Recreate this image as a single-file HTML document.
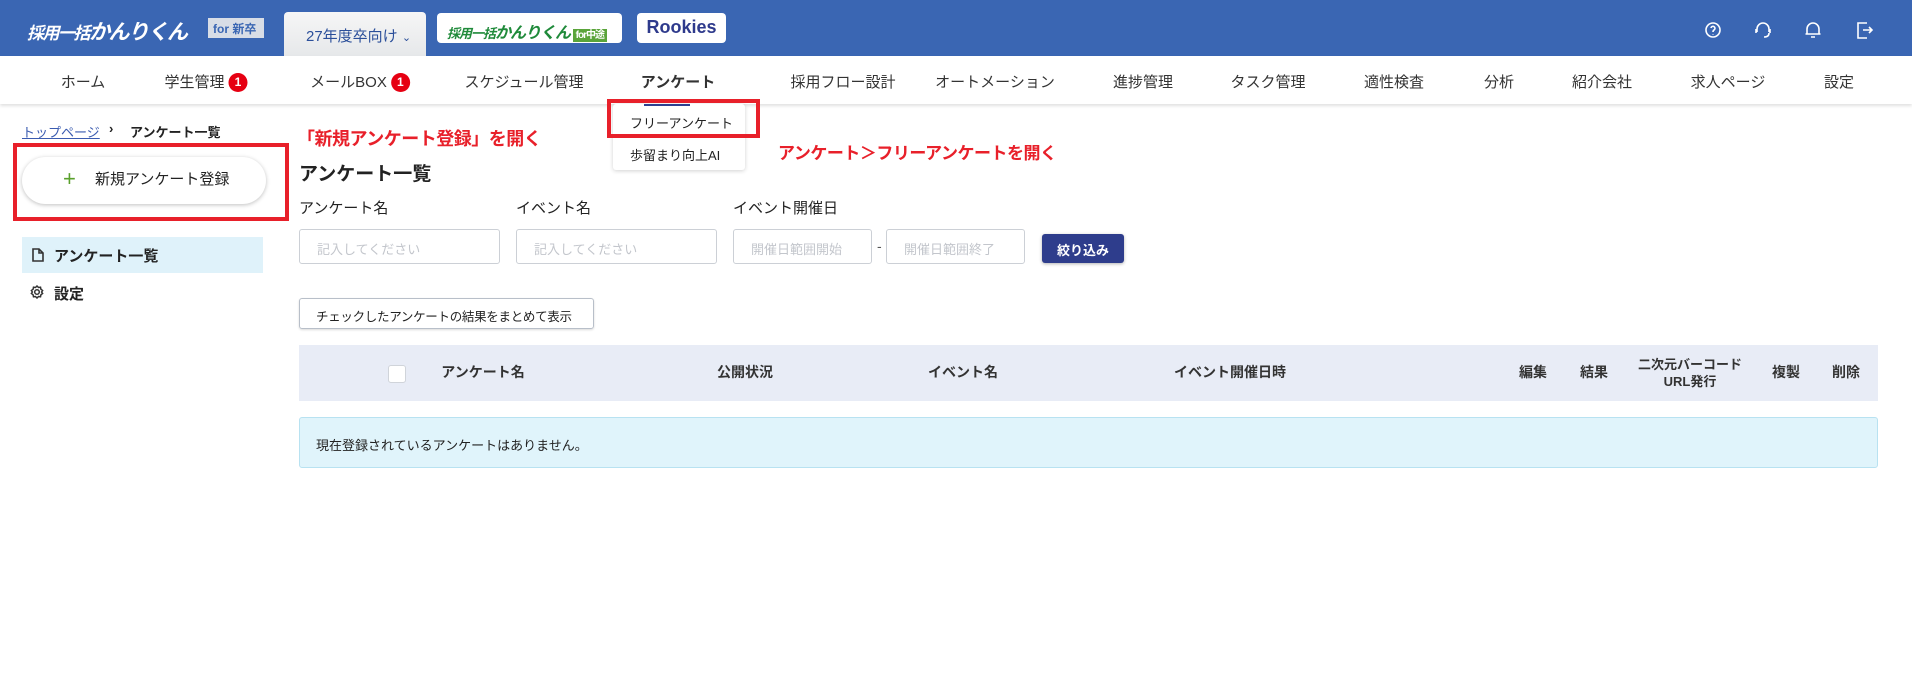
<!DOCTYPE html>
<html><head><meta charset="utf-8">
<style>
*{box-sizing:border-box;margin:0;padding:0}
body{width:1912px;height:679px;background:#fff;font-family:"Liberation Sans","Noto Sans CJK JP",sans-serif;color:#222;position:relative;overflow:hidden}
.a{position:absolute;white-space:nowrap}
.hdr{left:0;top:0;width:1912px;height:56px;background:#3a66b3}
.nav{left:0;top:56px;width:1912px;height:48px;background:#fff;box-shadow:0 2px 3px rgba(0,0,0,.12)}
.ni{top:71px;font-size:15px;color:#333;transform:translateX(-50%)}
.badge{display:inline-block;width:19px;height:19px;border-radius:50%;background:#e60012;color:#fff;font-size:12px;font-weight:bold;text-align:center;line-height:19px;vertical-align:1px;margin-left:4px}
.lbl{top:197px;font-size:15px;color:#222}
.inp{top:229px;height:35px;border:1px solid #ccd0d6;border-radius:3px;font-size:13px;color:#c3c6cc;padding:9px 0 0 17px}
.th{top:362px;font-size:14px;font-weight:bold;color:#333;transform:translateX(-50%);text-align:center}
.red{color:#e8202a;font-weight:bold}
.rbox{border:4px solid #e8202a}
</style></head><body>
<div class="a hdr"></div>
<div class="a" style="left:27px;top:16px;font-size:17px;font-weight:bold;font-style:italic;color:#fff;letter-spacing:-1.5px">採用一括<span style="font-size:21px">かんりくん</span></div>
<div class="a" style="left:208px;top:18px;width:56px;height:20px;background:#d8dde6;color:#3a66b3;font-size:12px;font-weight:bold;padding:2px 0 0 5px">for 新卒</div>
<div class="a" style="left:284px;top:12px;width:142px;height:44px;background:linear-gradient(#f6f6f6,#e6e8ea);border-radius:4px 4px 0 0;color:#2b4f9a;font-size:15px;padding:13px 0 0 22px">27年度卒向け <span style="font-size:11px">&#8964;</span></div>
<div class="a" style="left:437px;top:13px;width:185px;height:30px;background:#fff;border-radius:4px;padding:6px 0 0 10px;font-size:13px;font-weight:bold;font-style:italic;color:#1f8a3a;letter-spacing:-1px">採用一括<span style="font-size:16px">かんりくん</span> <span style="background:#5aa43a;color:#fff;font-size:10px;font-style:normal;padding:1px 3px">for中途</span></div>
<div class="a" style="left:637px;top:13px;width:89px;height:30px;background:#fff;border-radius:4px;text-align:center;padding-top:4px;font-size:18px;font-weight:bold;color:#2e3a8c">Rookies</div>
<svg class="a" style="left:1703px;top:19px" width="180" height="22" fill="none" stroke="#fff" stroke-width="1.6">
<circle cx="10" cy="11" r="7"/><path d="M8 9a2 2 0 1 1 3 2c-1 .6-1 1-1 2M10 15v.5"/>
<path d="M54 13v-3a6 6 0 0 1 12 0v3M53 10v4M67 10v4M66 14q0 4-5 4"/>
<path d="M104 15V10a6 6 0 0 1 12 0v5h1.5H102.5h1.5M108 18h4"/>
<path d="M164 4h-9v15h9M160 11h8M166 8l3 3-3 3"/>
</svg>
<div class="a nav"></div>
<div class="a ni" style="left:83px">ホーム</div>
<div class="a ni" style="left:206px">学生管理<span class="badge">1</span></div>
<div class="a ni" style="left:360px">メールBOX<span class="badge">1</span></div>
<div class="a ni" style="left:524px">スケジュール管理</div>
<div class="a ni" style="left:678px;font-weight:bold">アンケート</div>
<div class="a ni" style="left:843px">採用フロー設計</div>
<div class="a ni" style="left:995px">オートメーション</div>
<div class="a ni" style="left:1143px">進捗管理</div>
<div class="a ni" style="left:1268px">タスク管理</div>
<div class="a ni" style="left:1394px">適性検査</div>
<div class="a ni" style="left:1499px">分析</div>
<div class="a ni" style="left:1602px">紹介会社</div>
<div class="a ni" style="left:1728px">求人ページ</div>
<div class="a ni" style="left:1839px">設定</div>
<div class="a" style="left:613px;top:104px;width:132px;height:66px;background:#fff;border-radius:3px;box-shadow:0 1px 4px rgba(0,0,0,.18)"></div>
<div class="a" style="left:644px;top:104px;width:46px;height:2px;background:#2e3f8f"></div>
<div class="a" style="left:630px;top:113px;font-size:13px">フリーアンケート</div>
<div class="a" style="left:630px;top:145px;font-size:13px">歩留まり向上AI</div>
<div class="a rbox" style="left:607px;top:99px;width:153px;height:39px"></div>
<div class="a" style="left:22px;top:122px;font-size:13px;color:#3a5bb0;text-decoration:underline">トップページ</div>
<div class="a" style="left:109px;top:121px;font-size:13px;font-weight:bold">›</div>
<div class="a" style="left:130px;top:122px;font-size:13px;font-weight:bold">アンケート一覧</div>
<div class="a red" style="left:297px;top:125px;font-size:18px;letter-spacing:-0.5px">「新規アンケート登録」を開く</div>
<div class="a red" style="left:778px;top:139px;font-size:17px;letter-spacing:-0.5px">アンケート＞フリーアンケートを開く</div>
<div class="a" style="left:22px;top:157px;width:244px;height:47px;border-radius:24px;background:#fff;box-shadow:0 1px 4px rgba(0,0,0,.25)"></div>
<div class="a" style="left:63px;top:166px;font-size:22px;line-height:26px;color:#5aa02c">+</div>
<div class="a" style="left:95px;top:170px;font-size:15px;line-height:20px">新規アンケート登録</div>
<div class="a rbox" style="left:13px;top:143px;width:276px;height:78px"></div>
<div class="a" style="left:22px;top:237px;width:241px;height:36px;background:#dff2fa"></div>
<svg class="a" style="left:32px;top:248px" width="12" height="14" fill="none" stroke="#333" stroke-width="1.6"><path d="M1 1h6l4 4v8H1z M7 1v4h4"/></svg>
<div class="a" style="left:54px;top:245px;font-size:15px;font-weight:bold">アンケート一覧</div>
<svg class="a" style="left:30px;top:285px" width="14" height="14" fill="none" stroke="#333" stroke-width="1.5"><circle cx="7" cy="7" r="2.3"/><path d="M7 1l1.5 1.5 2-.3.4 2 1.7 1.3-1 1.5 1 1.5-1.7 1.3-.4 2-2-.3L7 13l-1.5-1.5-2 .3-.4-2L1.4 8.5l1-1.5-1-1.5 1.7-1.3.4-2 2 .3z"/></svg>
<div class="a" style="left:54px;top:283px;font-size:15px;font-weight:bold">設定</div>
<div class="a" style="left:299px;top:159px;font-size:19px;font-weight:bold">アンケート一覧</div>
<div class="a lbl" style="left:299px">アンケート名</div>
<div class="a lbl" style="left:516px">イベント名</div>
<div class="a lbl" style="left:733px">イベント開催日</div>
<div class="a inp" style="left:299px;width:201px">記入してください</div>
<div class="a inp" style="left:516px;width:201px">記入してください</div>
<div class="a inp" style="left:733px;width:139px">開催日範囲開始</div>
<div class="a" style="left:877px;top:238px;font-size:14px;color:#555">-</div>
<div class="a inp" style="left:886px;width:139px">開催日範囲終了</div>
<div class="a" style="left:1042px;top:234px;width:82px;height:29px;background:#2e3d8c;border-radius:3px;color:#fff;font-size:13px;font-weight:bold;text-align:center;padding-top:6px;box-shadow:0 1px 3px rgba(0,0,0,.3)">絞り込み</div>
<div class="a" style="left:299px;top:298px;width:295px;height:31px;border:1px solid #b8bfc9;border-radius:3px;font-size:12.5px;padding:7px 0 0 16px;box-shadow:0 1px 2px rgba(0,0,0,.15);letter-spacing:-0.3px">チェックしたアンケートの結果をまとめて表示</div>
<div class="a" style="left:299px;top:345px;width:1579px;height:56px;background:#e8ecf6"></div>
<div class="a" style="left:388px;top:365px;width:18px;height:18px;background:#fff;border:1px solid #d0d4da;border-radius:3px"></div>
<div class="a th" style="left:483px">アンケート名</div>
<div class="a th" style="left:745px">公開状況</div>
<div class="a th" style="left:963px">イベント名</div>
<div class="a th" style="left:1230px">イベント開催日時</div>
<div class="a th" style="left:1533px">編集</div>
<div class="a th" style="left:1594px">結果</div>
<div class="a th" style="left:1690px;top:356px;font-size:13px;line-height:17px">二次元バーコード<br>URL発行</div>
<div class="a th" style="left:1786px">複製</div>
<div class="a th" style="left:1846px">削除</div>
<div class="a" style="left:299px;top:417px;width:1579px;height:51px;background:#e0f4fb;border:1px solid #b8e2f1;border-radius:3px;font-size:13px;padding:17px 0 0 16px">現在登録されているアンケートはありません。</div>
</body></html>
